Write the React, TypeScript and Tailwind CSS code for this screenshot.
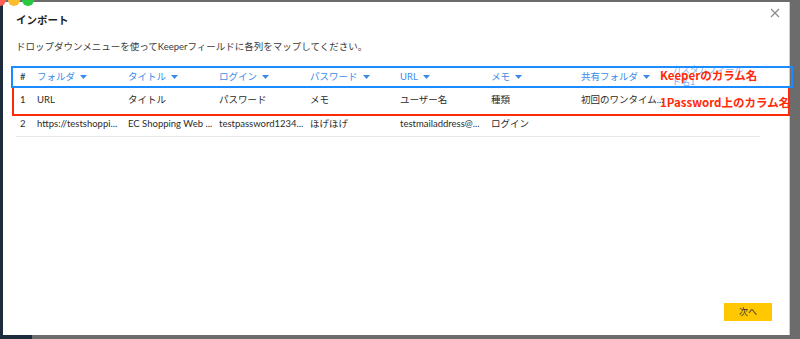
import React from "react";

const headers = ["フォルダ", "タイトル", "ログイン", "パスワード", "URL", "メモ", "共有フォルダ"];

const rows = [
  ["1", "URL", "タイトル", "パスワード", "メモ", "ユーザー名", "種類", "初回のワンタイム...", ""],
  [
    "2",
    "https://testshoppi...",
    "EC Shopping Web ...",
    "testpassword1234...",
    "ほげほげ",
    "testmailaddress@...",
    "ログイン",
    "",
    "",
  ],
];

const cols = "grid w-[744px] grid-cols-[21px_91px_91px_91px_90px_91px_90px_91px_88px]";

function Caret() {
  return (
    <svg width="7" height="4" viewBox="0 0 7 4" className="ml-[5px] shrink-0">
      <path d="M0 0h7L3.5 4z" fill="#3b8beb" />
    </svg>
  );
}

function App() {
  return (
    <div className="relative flex h-[339px] w-[800px] overflow-hidden bg-[#6c6c6c] font-[family-name:Lato,'Noto_Sans_CJK_JP',sans-serif] text-[#2b2b2b]">
      <div className="h-full w-[3px] bg-[#1d2c3e]" />

      <div className="mt-[2px] flex h-[333px] w-[787px] flex-col border-r border-[#cfcfcf] bg-white">
        <div className="flex items-start justify-between pl-[13px] pr-[9px] pt-[6px]">
          <h1 className="mt-[5px] text-[10.5px] font-bold leading-[14px] text-[#1f1f1f]">インポート</h1>
          <svg width="10" height="10" viewBox="0 0 10 10">
            <path d="M1 1l8 8M9 1l-8 8" stroke="#8a8a8a" strokeWidth="1.2" />
          </svg>
        </div>

        <p className="mt-[14px] px-[13px] text-[9.5px] leading-[12px] text-[#3a3a3a]">
          ドロップダウンメニューを使ってKeeperフィールドに各列をマップしてください。
        </p>

        <div className="mt-[13px] pl-[13px] text-[9.5px]">
          <div className={`${cols} h-[22px] items-center`}>
            <div className="pl-[4px] text-[#2b2b2b]">#</div>
            {headers.map((h) => (
              <div key={h} className="flex items-center text-[#3b8beb]">
                {h}
                <Caret />
              </div>
            ))}
            <div className="-mt-[2px] text-[9px] leading-[12px] text-[#7fb2ee]">
              カスタムフィール
              <br />
              ド名1
            </div>
          </div>
          {rows.map((r, i) => (
            <div
              key={i}
              className={`${cols} items-center ${i === 0 ? "h-[25px]" : "h-[24px] border-b border-[#e8e8e8]"}`}
            >
              {r.map((c, j) => (
                <div key={j} className={`overflow-hidden whitespace-nowrap ${j === 0 ? "pl-[4px]" : ""}`}>
                  {c}
                </div>
              ))}
            </div>
          ))}
        </div>

        <div className="flex-1" />
        <div className="flex justify-end pb-[14px] pr-[17px]">
          <button className="h-[18px] w-[48px] bg-[#ffc800] text-[9px] text-[#333]">次へ</button>
        </div>
      </div>

      {/* desktop strip under the dialog */}
      <div className="absolute bottom-0 left-0 h-[4px] w-[32px] bg-[#1d2c3e]" />

      {/* mac window buttons */}
      <div className="absolute left-[-6px] top-[-6px] flex gap-[2px]">
        <span className="h-[12px] w-[12px] rounded-full bg-[#ff5f57]" />
        <span className="h-[12px] w-[12px] rounded-full bg-[#febc2e]" />
        <span className="h-[12px] w-[12px] rounded-full bg-[#28c840]" />
      </div>

      {/* annotations */}
      <div className="absolute left-[11px] top-[66px] h-[22px] w-[782px] border-2 border-[#1a8cff]" />
      <div className="absolute left-[12px] top-[88px] h-[28px] w-[778px] border-2 border-t-0 border-[#ff2a0a]" />
      <div className="absolute left-[660px] top-[67px] font-[family-name:'Noto_Sans_CJK_JP',sans-serif] text-[11.5px] font-bold leading-[16px] text-[#ff2a0a]">
        Keeperのカラム名
      </div>
      <div className="absolute left-[660px] top-[94px] font-[family-name:'Noto_Sans_CJK_JP',sans-serif] text-[11.5px] font-bold leading-[16px] text-[#ff2a0a]">
        1Password上のカラム名
      </div>
    </div>
  );
}

export default App;
